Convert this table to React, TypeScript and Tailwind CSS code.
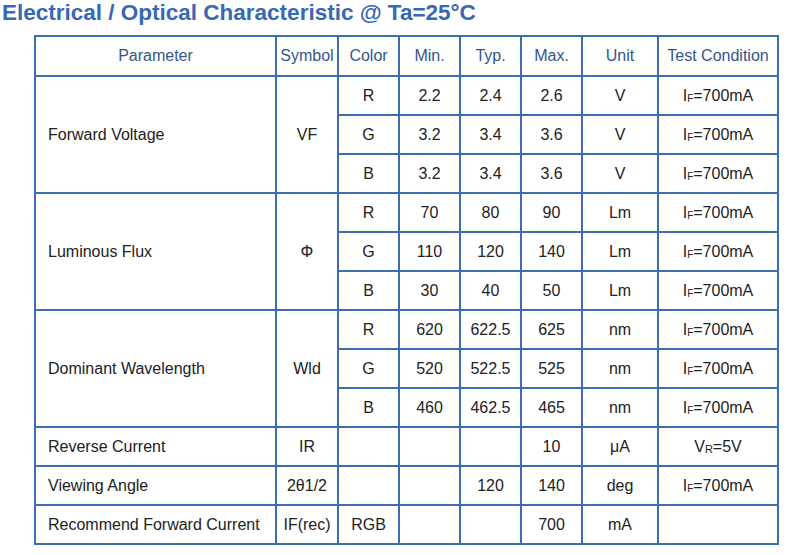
import React from "react";

const If = () => (
  <>
    I<span className="text-[10px] align-[-1px]">F</span>=700mA
  </>
);

type Row = {
  color?: string;
  min?: string;
  typ?: string;
  max?: string;
  unit: string;
  cond?: React.ReactNode;
};

const groups: { param: string; symbol: string; rows: Row[] }[] = [
  {
    param: "Forward Voltage",
    symbol: "VF",
    rows: [
      { color: "R", min: "2.2", typ: "2.4", max: "2.6", unit: "V", cond: <If /> },
      { color: "G", min: "3.2", typ: "3.4", max: "3.6", unit: "V", cond: <If /> },
      { color: "B", min: "3.2", typ: "3.4", max: "3.6", unit: "V", cond: <If /> },
    ],
  },
  {
    param: "Luminous Flux",
    symbol: "Φ",
    rows: [
      { color: "R", min: "70", typ: "80", max: "90", unit: "Lm", cond: <If /> },
      { color: "G", min: "110", typ: "120", max: "140", unit: "Lm", cond: <If /> },
      { color: "B", min: "30", typ: "40", max: "50", unit: "Lm", cond: <If /> },
    ],
  },
  {
    param: "Dominant Wavelength",
    symbol: "Wld",
    rows: [
      { color: "R", min: "620", typ: "622.5", max: "625", unit: "nm", cond: <If /> },
      { color: "G", min: "520", typ: "522.5", max: "525", unit: "nm", cond: <If /> },
      { color: "B", min: "460", typ: "462.5", max: "465", unit: "nm", cond: <If /> },
    ],
  },
  {
    param: "Reverse Current",
    symbol: "IR",
    rows: [
      {
        max: "10",
        unit: "μA",
        cond: (
          <>
            V<span className="text-[11px] align-[-1px]">R</span>=5V
          </>
        ),
      },
    ],
  },
  {
    param: "Viewing Angle",
    symbol: "2θ1/2",
    rows: [{ typ: "120", max: "140", unit: "deg", cond: <If /> }],
  },
  {
    param: "Recommend Forward Current",
    symbol: "IF(rec)",
    rows: [{ color: "RGB", max: "700", unit: "mA" }],
  },
];

const td = "border-2 border-[#3d6db4] text-center p-0";

export default function App() {
  return (
    <div className="h-[555px] w-[800px] bg-white font-['Liberation_Sans',Arial,sans-serif]">
      <h1 className="h-[35px] pl-[2px] pt-[1px] text-[22.5px] font-bold leading-[24px] text-[#3768b4]">
        Electrical / Optical Characteristic @ Ta=25°C
      </h1>
      <table className="ml-[34px] w-[743px] table-fixed border-collapse text-[16px] text-[#222]">
        <colgroup>
          <col className="w-[241px]" />
          <col className="w-[62px]" />
          <col className="w-[61px]" />
          <col className="w-[61px]" />
          <col className="w-[61px]" />
          <col className="w-[61px]" />
          <col className="w-[76px]" />
          <col className="w-[120px]" />
        </colgroup>
        <thead>
          <tr className="h-[40px] text-[#33568c]">
            <th className={`${td} font-normal`}>Parameter</th>
            <th className={`${td} font-normal`}>Symbol</th>
            <th className={`${td} font-normal`}>Color</th>
            <th className={`${td} font-normal`}>Min.</th>
            <th className={`${td} font-normal`}>Typ.</th>
            <th className={`${td} font-normal`}>Max.</th>
            <th className={`${td} font-normal`}>Unit</th>
            <th className={`${td} font-normal`}>Test Condition</th>
          </tr>
        </thead>
        <tbody>
          {groups.map((g) =>
            g.rows.map((r, i) => (
              <tr key={g.param + i} className="h-[39px]">
                {i === 0 && (
                  <>
                    <td rowSpan={g.rows.length} className={`${td} !text-left pl-[12px]`}>
                      {g.param}
                    </td>
                    <td rowSpan={g.rows.length} className={td}>
                      {g.symbol}
                    </td>
                  </>
                )}
                <td className={td}>{r.color}</td>
                <td className={td}>{r.min}</td>
                <td className={td}>{r.typ}</td>
                <td className={td}>{r.max}</td>
                <td className={td}>{r.unit}</td>
                <td className={td}>{r.cond}</td>
              </tr>
            ))
          )}
        </tbody>
      </table>
    </div>
  );
}
